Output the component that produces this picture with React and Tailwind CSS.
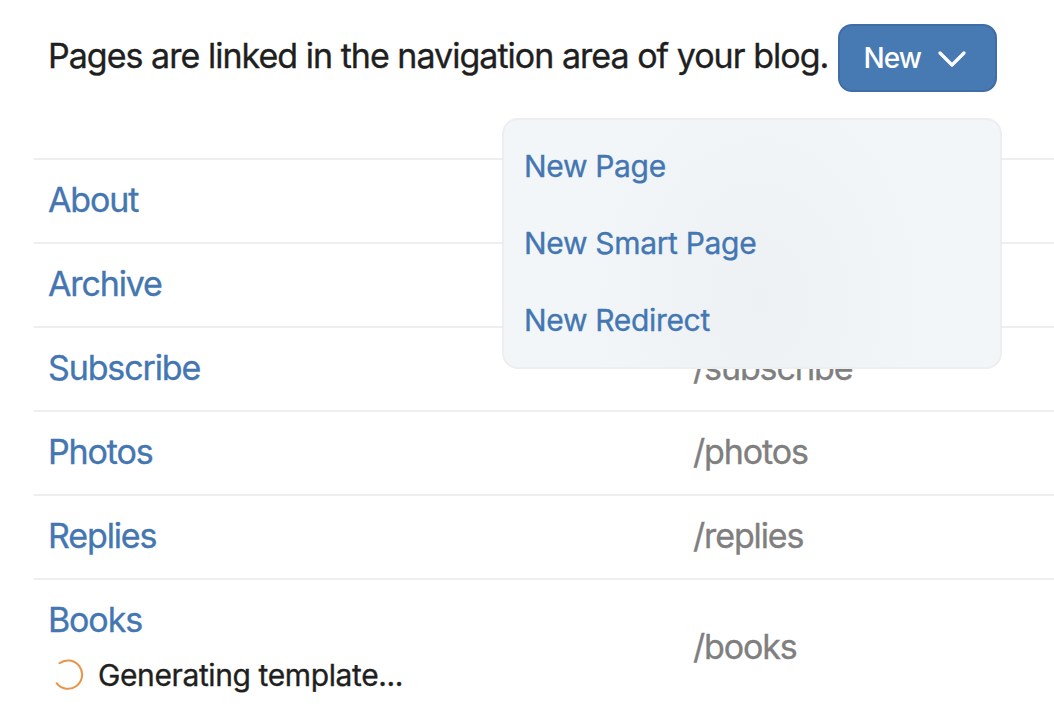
const rows = [
  { name: "About", path: "/about" },
  { name: "Archive", path: "/archive" },
  { name: "Subscribe", path: "/subscribe" },
  { name: "Photos", path: "/photos" },
  { name: "Replies", path: "/replies" },
];

const actions = ["New Page", "New Smart Page", "New Redirect"];

function Chevron() {
  return (
    <svg className="mt-0.5" width="28" height="18" viewBox="0 0 28 18" fill="none" stroke="currentColor" strokeWidth="3.2" strokeLinecap="round" strokeLinejoin="round">
      <path d="M2 3l12 12L26 3" />
    </svg>
  );
}

function Spinner() {
  return (
    <svg className="ml-1" width="32" height="32" viewBox="0 0 32 32" fill="none" stroke="#e8954a" strokeWidth="2" strokeLinecap="round">
      <path d="M7.5 4.2A14.2 14.2 0 1 1 4.6 24.2" />
    </svg>
  );
}

export default function App() {
  return (
    <div className="h-[712px] w-[1054px] overflow-hidden bg-white pl-[34px] font-['Inter',sans-serif] text-[34px] leading-[42px] tracking-[-1.13px] text-[#1f1f21] [-webkit-text-stroke:0.35px]">
      <header className="flex h-[158px] items-start pl-[14px] pt-6">
        <p className="mt-[11px] w-[790px] whitespace-nowrap tracking-[-0.98px]">Pages are linked in the navigation area of your blog.</p>
        <div className="relative">
          <button className="flex h-[68px] w-[159px] items-center gap-[17px] rounded-[14px] border-2 border-[#3f6ea6] bg-[#4779b3] pl-[23.5px] text-[28px] font-medium tracking-[-0.9px] text-white [-webkit-text-stroke:0]">
            New
            <Chevron />
          </button>
          <nav className="absolute -right-[5px] top-[94px] flex h-[251px] w-[500px] flex-col rounded-[16px] border-2 border-[#eeeeee] bg-[#f2f6f9] bg-[radial-gradient(ellipse_180px_240px_at_255px_180px,#edf1f4,#eff3f6_45%,#f2f6f9)] pl-5 pt-[7px] text-[30px] tracking-[-0.32px] text-[#4477b2]">
            {actions.map((label) => (
              <a key={label} className="flex h-[77px] items-center">{label}</a>
            ))}
          </nav>
        </div>
      </header>
      <main>
        {rows.map((r) => (
          <div key={r.name} className="flex h-[84px] items-center border-t-2 border-[#eeeeee] pb-0.5 pl-[14px]">
            <a className="w-[645px] text-[#4477b2]">{r.name}</a>
            <span className="text-[#7f7f7f]">{r.path}</span>
          </div>
        ))}
        <div className="flex h-[138px] items-center border-t-2 border-[#eeeeee] pb-0.5 pl-[14px]">
          <div className="w-[645px]">
            <a className="block text-[#4477b2]">Books</a>
            <div className="mt-[13px] flex items-center gap-[14px] text-[30px] tracking-[-0.39px]">
              <Spinner />
              Generating template...
            </div>
          </div>
          <span className="text-[#7f7f7f]">/books</span>
        </div>
      </main>
    </div>
  );
}
